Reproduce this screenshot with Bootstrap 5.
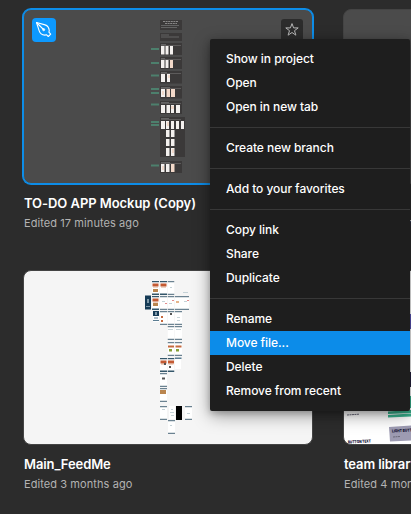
<!DOCTYPE html>
<html lang="en" data-bs-theme="dark">
<head>
<meta charset="utf-8">
<meta name="viewport" content="width=device-width, initial-scale=1">
<title>Recent files</title>
<link rel="stylesheet" href="https://cdn.jsdelivr.net/npm/bootstrap@5.3.0/dist/css/bootstrap.min.css">
<style>
body{background:#2c2c2c;font-family:Inter,"Liberation Sans",sans-serif;height:514px}
.files{display:grid;grid-template-columns:290px 290px;column-gap:30px;row-gap:25px;padding:9px 0 0 23px;width:640px}
.file{height:236px}
.thumb{height:175px;border:1px solid #444;border-radius:8px;background:#4b4b4b;overflow:hidden}
.thumb svg{display:block}
.thumb.light{background:#f5f5f5}
.thumb.white{background:#fff}
.selected .thumb{box-shadow:0 0 0 1px #0d8de8;border-color:#0d8de8}
.file-name{font-size:13px;line-height:16px;font-weight:600;color:#fff;margin:11px 0 0 1px;letter-spacing:-.1px}
.selected .file-name{letter-spacing:-.06px}
.file-date{font-size:11px;line-height:16px;color:#b3b3b3;margin:4px 0 0 1px;letter-spacing:.08px}
.kind{left:8px;top:8px;width:24px;height:24px;border-radius:4px;background:#0d99ff}
.fav{left:257px;top:9px;width:22px;height:22px;border-radius:3px;background:#2c2c2c}
.context{left:210px;top:39px;width:200px;height:372px;padding:8px 0;background:#1e1e1e;border:0;border-radius:2px;box-shadow:0 5px 17px rgba(0,0,0,.35),0 2px 7px rgba(0,0,0,.25);min-width:0}
.context .dropdown-item{height:24px;padding:0 16px;font-size:12px;line-height:24px;font-weight:500;color:#fff;letter-spacing:-.06px}
.context .dropdown-item.active{background:#0c8ce9}
.context .dropdown-divider{height:1px;margin:8px 0;border-top:1px solid #383838;opacity:1}
</style>
<script src="https://cdn.jsdelivr.net/npm/bootstrap@5.3.0/dist/js/bootstrap.bundle.min.js"></script>
</head>
<body class="overflow-hidden position-relative m-0">
<svg width="0" height="0" class="position-absolute">
  <symbol id="s" viewBox="0 0 7 14"><path fill="#fff" d="M0 0h7v14H0z"/><path fill="#6b8291" d="M0 0h7v1.200H0zM0 12.800h7V14H0z"/></symbol>
  <symbol id="h" viewBox="0 0 7 14"><path fill="#fff" d="M0 0h7v14H0z"/><path fill="#34566a" d="M0 0h7v1.300H0zM0 12.600h7V14H0z"/><path fill="#c45a33" d="M.5 2.500h6v3h-6z"/><path fill="#dca88b" d="M1 5.500h5v1H1z"/></symbol>
</svg>
<main class="files">
  <article class="file selected">
    <div class="thumb position-relative">
      <svg width="288" height="173" viewBox="24 10 288 173">
        <path fill="#3b3939" d="M160 20h22v10h-22zM160 33h22v8h-22zM160 43h22v12h-22zM160 57h22v12h-22zM160 71h22v12.500h-22zM160 86h22v12.500h-22zM160 101h22v13h-22zM160 117h25v40h-25zM160 161h22v12h-22z"/>
        <path stroke="#aaa" stroke-width="1" stroke-dasharray="2 .6" opacity=".7" d="M163 21.500h15M165 23.500h12"/>
        <path stroke="#777" stroke-width=".7" d="M161 25.500h18M161 27.500h16M161 35h8M161 37h18M161 44.500h5M161 58.500h4M161 72.500h6M161 87.500h9M161 102.500h8M161 118.500h8M161 162.500h9"/>
        <path stroke="#5d5b5b" d="M161 45.500h20M161 59.500h20M161 73.500h20M161 88.500h20M161 103.500h20M161 119.500h20M161 163.500h20"/>
        <path stroke="#4d806d" stroke-width="2" d="M151 49h8M151 63h8M151 75.500h8M151 89h8M151 93h8M151 104.500h8M151 122h8M151 125h8M151 165.500h8"/>
        <path fill="#f3f0ee" d="M161 46h3.500v8.500H161zm4.500 0h3v8.500h-3zm4.500 0h3v8.500h-3zM161 60h3.500v8H161zm4.500 0h3v8h-3zM161 74h4v8h-4zm6 0h3v8h-3zM161 89h4v8h-4zM161 105h4v8h-4zm5.500 0h3.500v8h-3.500zm4.500 0h3v8h-3zm5 0h4v8h-4zM161 121h4v8h-4zm5 0h3v8h-3zm5 0h3v8h-3zm5 0h3v8h-3zm5 0h3v8h-3zM166 130h3.500v7H166zm5 0h3.500v7H171zM166 139h3.500v7H166zm5 0h3.500v7H171zM166 148h3.500v8H166zm5 0h3.500v8H171zM161 164h3.500v8H161zm5 0h3.500v8H166z"/>
        <path fill="#f2d8c8" d="M170 60h3v8h-3zM166.500 89h3.500v8h-3.500zm4.500 0h4v8h-4zM171 164h3.500v8H171z"/>
        <path fill="#eecab4" opacity=".6" d="M168 75h2v3h-2zM162 91h2v4h-2zM171 106h3v3h-3zM167 122h2v4h-2zM172 149h2v4h-2zM162 166h2v4h-2z"/>
      </svg>
      <div class="kind position-absolute">
        <svg width="24" height="24" viewBox="0 0 24 24" fill="none" stroke="#fff" stroke-width="1.100" stroke-linejoin="round"><path d="M4.500 4.500l8.600 2.400c2.300.7 3.900 2.700 4.200 5.800l-.4 1.500 1.800 1.900-2.400 2.400-1.900-1.800-1.500.4c-3.100-.3-5-1.800-5.700-4.200z"/><path d="M4.500 4.500l7 7"/><circle cx="11.700" cy="11.700" r="1.100" fill="#fff" stroke-width=".6"/></svg>
      </div>
      <div class="fav position-absolute">
        <svg width="22" height="22" viewBox="0 0 22 22" fill="none" stroke="#b8b8b8" stroke-width="1"><path d="M11 4.600l1.600 4.300h4.600l-3.700 2.800 1.400 4.500-3.900-2.700-3.900 2.700 1.400-4.500-3.700-2.800h4.600z"/></svg>
      </div>
    </div>
    <h2 class="file-name text-nowrap">TO-DO APP Mockup (Copy)</h2>
    <p class="file-date mb-0">Edited 17 minutes ago</p>
  </article>
  <article class="file"><div class="thumb"></div>
    <h2 class="file-name text-nowrap">Wireframe kit</h2>
    <p class="file-date mb-0">Edited 2 months ago</p>
  </article>
  <article class="file">
    <div class="thumb light">
      <svg width="288" height="173" viewBox="24 271 288 173">
        <path fill="#163b56" d="M145 295.500h6v14h-6zM153 311h6v5h-6z"/>
        <path fill="#7e98a8" d="M147 299h2v4h-2zM146 306h4v1h-4zM155 312h2v3h-2z"/>
        <g>
          <use href="#h" x="152" y="281" width="7" height="14"/><use href="#h" x="160" y="281" width="7" height="14"/><use href="#s" x="167.500" y="281" width="7" height="14"/>
          <use href="#h" x="152" y="296" width="7" height="14"/><use href="#s" x="160" y="296" width="7" height="14"/><use href="#s" x="167.500" y="296" width="7" height="14"/><use href="#s" x="175" y="296" width="7" height="14"/><use href="#s" x="182" y="296" width="7" height="14"/>
          <use href="#s" x="160" y="311" width="7" height="14"/><use href="#s" x="167.500" y="311" width="7" height="14"/><use href="#s" x="175" y="311" width="7" height="14"/>
          <use href="#s" x="167.500" y="326" width="7" height="14"/><use href="#s" x="175" y="326" width="7" height="14"/>
          <use href="#s" x="167.500" y="342" width="7" height="14"/><use href="#s" x="175" y="342" width="7" height="14"/>
          <use href="#h" x="160" y="358" width="7" height="14"/><use href="#h" x="167.500" y="358" width="7" height="14"/>
          <use href="#s" x="160" y="373" width="7" height="14"/><use href="#s" x="160" y="388" width="7" height="14"/>
          <use href="#s" x="160" y="406" width="7" height="14"/><use href="#s" x="185" y="406" width="7" height="14"/><use href="#s" x="168" y="420" width="7" height="14"/>
        </g>
        <path fill="#fff" d="M153 316h6v6h-6zM175 359h6v10h-6zM169 406h6v13h-6z"/>
        <path fill="#000" d="M176 406h6v14h-6z"/>
        <path fill="#5b7d92" d="M175 357.500h6.500v1.500H175zM153 320h6v1h-6zM154 317.500h4v1h-4z"/>
        <path fill="#ba854e" d="M153 289h5v3h-5zM153 303h5v3h-5zM160 390h6v4h-6z"/>
        <path fill="#c5693e" d="M168 345.500h6v2h-6zM175.500 345.500h6v2h-6zM161 316h2v2h-2zM161 320h2v2h-2z"/>
        <path fill="#849f38" d="M169 349h3v2.500h-3zM176 349h3v2.500h-3z"/>
        <path fill="#e6b58b" d="M176 301h3v2h-3z"/>
        <path fill="#e48c8c" d="M165 303h2v1h-2zM172 300h2v1h-2zM187 300h2v1h-2z"/>
        <path fill="#555" d="M170 313h2v2h-2zM162 377.500h3v2h-3zM169 366h2v2h-2zM164 363h2v2h-2z"/>
        <path stroke="#c5d2d7" d="M170 287.500h2M162 301.500h3M169 303.500h3M184 301.500h3M183 292.500h5M177 317.500h3M177 320.500h3M168 329.500h5M176 329.500h5M162 409.500h3M171 409.500h2M170 412.500h4M171 415.500h3M187 413.500h3M170 425.500h2"/>
      </svg>
    </div>
    <h2 class="file-name text-nowrap">Main_FeedMe</h2>
    <p class="file-date mb-0">Edited 3 months ago</p>
  </article>
  <article class="file">
    <div class="thumb white">
      <svg width="288" height="173" viewBox="344 271 288 173">
        <path fill="#5b55b8" d="M408 314h8v15h-8z"/><path fill="#24213e" d="M408 372h8v15h-8z"/>
        <path fill="#38b38e" d="M388 411.500l32-2v3l-32 1.500zM388 415l32-2v3l-32 1.500zM408 396h8v12h-8z"/>
        <path fill="#9d9bb2" d="M389 427l30-2v15l-29 1.500z"/>
        <g font-family="Inter,sans-serif" font-weight="900" fill="#20203b"><text x="348" y="443.500" font-size="4" textLength="23" lengthAdjust="spacingAndGlyphs" transform="rotate(-3 348 444)">BUTTON TEXT</text><text x="392" y="432.500" font-size="4" textLength="25" lengthAdjust="spacingAndGlyphs" transform="rotate(-3 392 432)">LIGHT BUTTON</text></g>
        <path stroke="#696878" d="M347 415l12-.8M393 437l7-.5" stroke-dasharray="2 .5"/>
      </svg>
    </div>
    <h2 class="file-name text-nowrap">team library</h2>
    <p class="file-date mb-0">Edited 4 months ago</p>
  </article>
</main>
<div class="dropdown-menu context d-block position-absolute" role="menu">
  <a class="dropdown-item">Show in project</a>
  <a class="dropdown-item">Open</a>
  <a class="dropdown-item">Open in new tab</a>
  <hr class="dropdown-divider">
  <a class="dropdown-item">Create new branch</a>
  <hr class="dropdown-divider">
  <a class="dropdown-item">Add to your favorites</a>
  <hr class="dropdown-divider">
  <a class="dropdown-item">Copy link</a>
  <a class="dropdown-item">Share</a>
  <a class="dropdown-item">Duplicate</a>
  <hr class="dropdown-divider">
  <a class="dropdown-item">Rename</a>
  <a class="dropdown-item active">Move file...</a>
  <a class="dropdown-item">Delete</a>
  <a class="dropdown-item">Remove from recent</a>
</div>
</body>
</html>
